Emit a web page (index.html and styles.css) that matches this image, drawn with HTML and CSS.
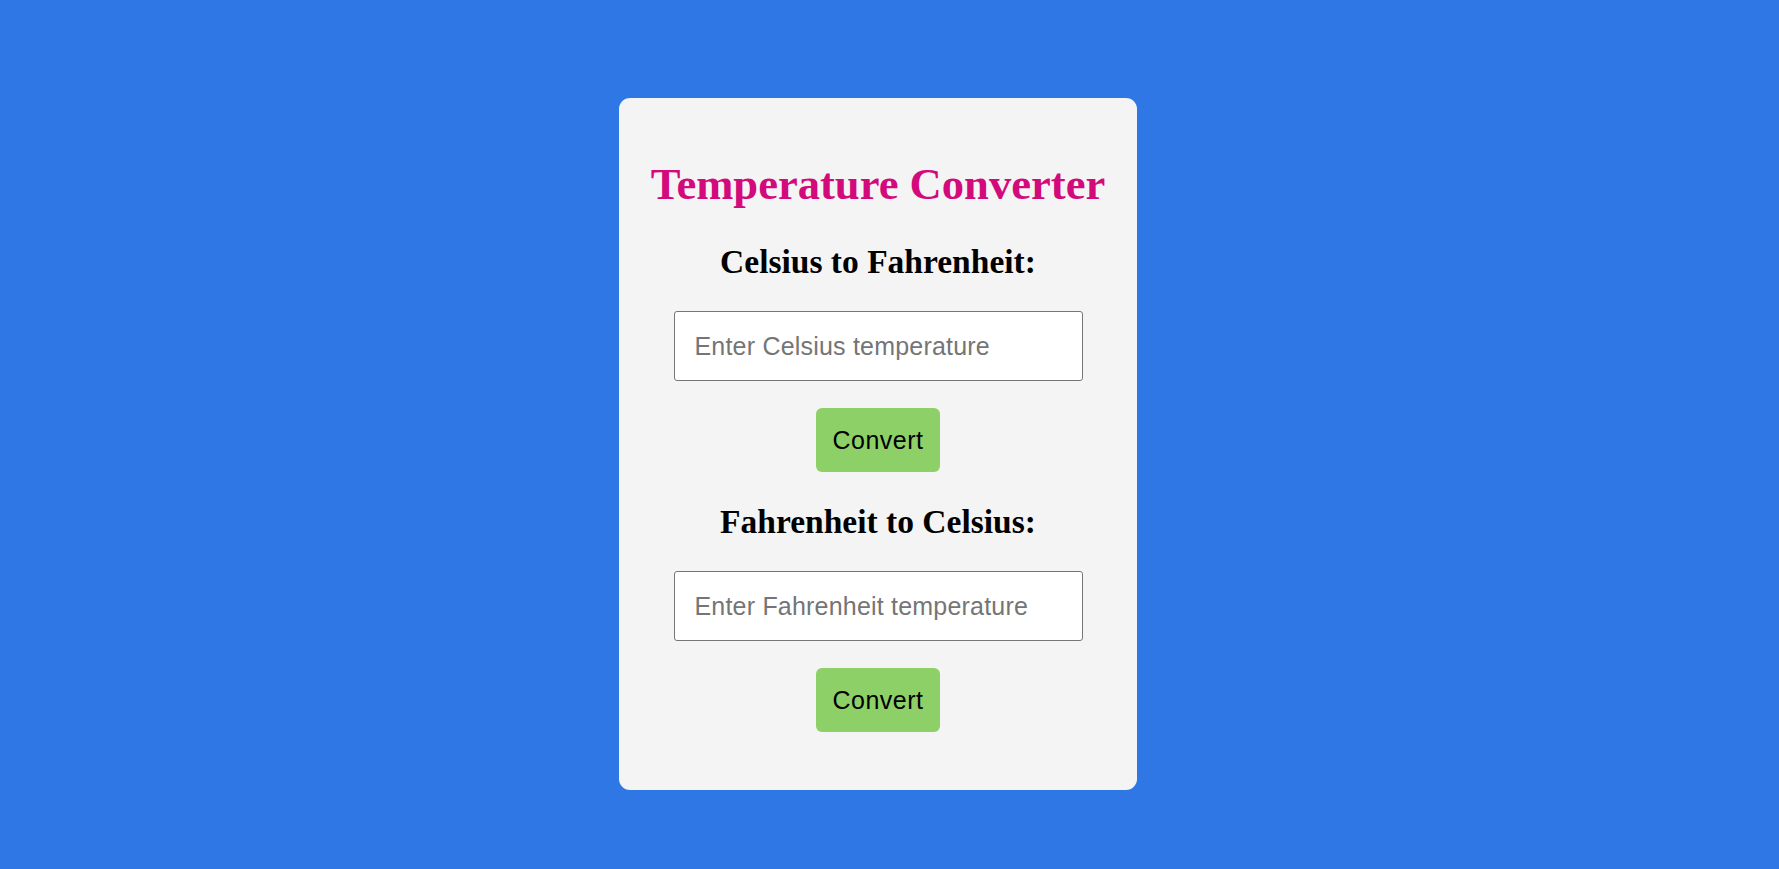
FILE: index.html
```html
<!DOCTYPE html>
<html lang="en">
<head>
<meta charset="utf-8">
<title>Temperature Converter</title>
<link rel="stylesheet" href="styles.css">
</head>
<body>
<div class="page">
  <div class="card">
    <h1 class="title">Temperature Converter</h1>
    <h2 class="sub">Celsius to Fahrenheit:</h2>
    <input class="field" type="text" placeholder="Enter Celsius temperature">
    <button class="btn" type="button">Convert</button>
    <h2 class="sub sub-second">Fahrenheit to Celsius:</h2>
    <input class="field" type="text" placeholder="Enter Fahrenheit temperature">
    <button class="btn" type="button">Convert</button>
  </div>
</div>
</body>
</html>
```
FILE: styles.css
```css
html, body {
  margin: 0;
  padding: 0;
  background: #2e77e5;
  height: 100%;
}
.page {
  display: flex;
  justify-content: center;
  align-items: flex-start;
  padding: 98px 23px 0 0;
  box-sizing: border-box;
  height: 100%;
}
.card {
  width: 518px;
  background: #f4f4f4;
  border-radius: 11px;
  display: flex;
  flex-direction: column;
  align-items: center;
  padding: 60px 0 58px;
  box-sizing: border-box;
}
.title {
  margin: 0;
  font-family: "Liberation Serif", "Times New Roman", serif;
  font-weight: bold;
  font-size: 44.6px;
  line-height: 52px;
  color: #d20a7b;
}
.sub {
  margin: 32px 0 0;
  font-family: "Liberation Serif", "Times New Roman", serif;
  font-weight: bold;
  font-size: 33.5px;
  line-height: 40px;
  color: #000;
}
.sub-second {
  margin-top: 30px;
}
.field {
  margin-top: 29px;
  width: 409px;
  height: 70px;
  box-sizing: border-box;
  padding: 0 20px;
  border: 1px solid #767676;
  border-radius: 3px;
  background: #fff;
  font-family: "Liberation Sans", Arial, sans-serif;
  font-size: 25px;
  letter-spacing: 0.2px;
  color: #000;
  outline: none;
}
.field::placeholder {
  color: #757575;
}
.btn {
  margin-top: 27px;
  width: 124px;
  height: 64px;
  border: none;
  border-radius: 6px;
  background: #8dd067;
  font-family: "Liberation Sans", Arial, sans-serif;
  font-size: 25px;
  letter-spacing: 0.5px;
  color: #000;
  padding: 0;
  cursor: pointer;
}
```
